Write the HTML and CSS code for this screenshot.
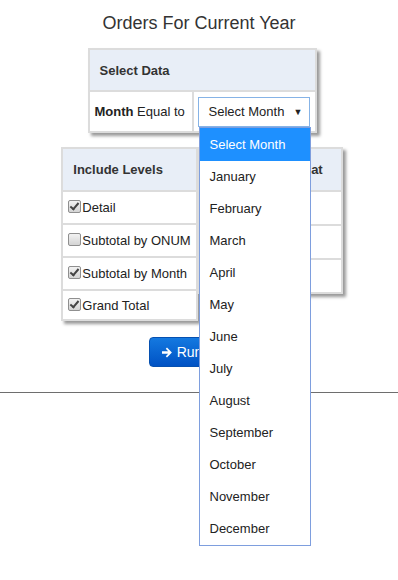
FILE: index.html
```html
<!DOCTYPE html>
<html lang="en">
  <head>
    <meta charset="UTF-8" />
    <meta name="viewport" content="width=device-width, initial-scale=1.0" />
    <title>Orders For Current Year</title>
    <link rel="stylesheet" href="styles.css">
  </head>
  <body>

    <h1 class="title">Orders For Current Year</h1>

    <div class="forms">
      <table class="panel select-panel">
        <tr>
          <th colspan="2">Select Data</th>
        </tr>
        <tr>
          <td class="label"><b>Month</b> Equal to</td>
          <td class="field">
            <div class="select-wrap">
              <div class="select">Select Month <span class="arrow">&#9660;</span></div>
              <ul class="options">
                <li class="active">Select Month</li>
                <li>January</li>
                <li>February</li>
                <li>March</li>
                <li>April</li>
                <li>May</li>
                <li>June</li>
                <li>July</li>
                <li>August</li>
                <li>September</li>
                <li>October</li>
                <li>November</li>
                <li>December</li>
              </ul>
            </div>
          </td>
        </tr>
      </table>

      <div class="levels">
        <table class="panel levels-panel">
          <tr><th>Include Levels</th></tr>
          <tr><td><span class="check on"></span>Detail</td></tr>
          <tr><td><span class="check"></span>Subtotal by ONUM</td></tr>
          <tr><td><span class="check on"></span>Subtotal by Month</td></tr>
          <tr><td class="last"><span class="check on"></span>Grand Total</td></tr>
        </table>
        <table class="panel format-panel">
          <tr><th>Output Format</th></tr>
          <tr><td></td></tr>
          <tr><td></td></tr>
          <tr><td></td></tr>
        </table>
      </div>

      <button class="run">
        <svg width="11" height="11" viewBox="0 0 11 11"><path d="M0 4.2h6.2L3.8 1.8 5 .6l4.9 4.9L5 10.4 3.8 9.2l2.4-2.4H0z" fill="#fff"/></svg>
        Run Report
      </button>
    </div>

    <hr class="rule">

  </body>
</html>
```

FILE: styles.css
```css
html, body {
  min-height: 580px;
}

body {
  margin: 0;
  font-family: "Liberation Sans", Arial, sans-serif;
  font-size: 13px;
  color: #222;
  background: #fff;
}

.title {
  margin: 12px 0 14px;
  font-size: 18px;
  line-height: 22px;
  font-weight: normal;
  text-align: center;
  color: #333;
}

.forms {
  display: flex;
  flex-direction: column;
  align-items: center;
  padding-left: 6px;
}

.panel {
  border-collapse: collapse;
  border: 2px solid #dcdcdc;
  box-shadow: 3px 3px 3px #9a9a9a;
  background: #fff;
}

.panel th {
  background-color: #e8eef7;
  text-align: left;
  font-weight: bold;
  color: #333;
  height: 40px;
  padding: 0 10px;
  border: 2px solid #dcdcdc;
}

.panel td {
  border: 2px solid #dcdcdc;
  padding: 0 5px;
}

.select-panel {
  width: 229px;
}

.select-panel .label {
  width: 92px;
  height: 39px;
  white-space: nowrap;
}

.select-panel .field {
  padding: 0 0 0 4px;
}

.select-wrap {
  position: relative;
  width: 112px;
}

.select {
  height: 28px;
  line-height: 28px;
  border: 1px solid #86b3e6;
  padding-left: 10px;
  font-size: 13px;
  color: #222;
  position: relative;
}

.arrow {
  position: absolute;
  right: 6px;
  top: 0;
  font-size: 9px;
}

.options {
  position: absolute;
  top: 30px;
  left: 1px;
  width: 110px;
  margin: 0;
  padding: 0;
  list-style: none;
  background: #fff;
  border: 1px solid #7e9ede;
  z-index: 5;
}

.options li {
  height: 32px;
  line-height: 32px;
  padding-left: 10px;
  color: #222;
}

.options li.active {
  height: 33px;
  line-height: 33px;
  background-color: #1e90ff;
  color: #fff;
}

.levels {
  display: flex;
  align-items: flex-start;
  margin-top: 14px;
}

.levels-panel {
  width: 135px;
}

.levels-panel th,
.format-panel th {
  height: 41px;
}

.levels-panel td {
  height: 31px;
  white-space: nowrap;
  padding-left: 5px;
}

.levels-panel td.last {
  height: 28px;
}

.format-panel {
  width: 145px;
  border-left: none;
}

.format-panel th {
  text-align: right;
  padding-right: 18px;
}

.format-panel td {
  height: 32px;
}

.check {
  display: inline-block;
  width: 11px;
  height: 11px;
  border: 1px solid #8f8f8f;
  border-radius: 2px;
  background: linear-gradient(#f2f2f2, #d4d4d4);
  vertical-align: -1px;
  margin-right: 1px;
  position: relative;
}

.check.on::after {
  content: "";
  position: absolute;
  left: 3px;
  top: 0px;
  width: 3px;
  height: 7px;
  border: solid #444;
  border-width: 0 2px 2px 0;
  transform: rotate(40deg);
}

.run {
  margin-top: 16px;
  margin-left: 6px;
  height: 30px;
  padding: 0 12px;
  border: 1px solid #0650b0;
  border-radius: 4px;
  background: linear-gradient(#1479e0, #0052c4);
  color: #fff;
  font-family: "Liberation Sans", Arial, sans-serif;
  font-size: 14px;
  display: flex;
  align-items: center;
  gap: 4px;
}

.rule {
  margin: 25px 0 0;
  border: none;
  border-top: 1px solid #6e6e6e;
}
```
